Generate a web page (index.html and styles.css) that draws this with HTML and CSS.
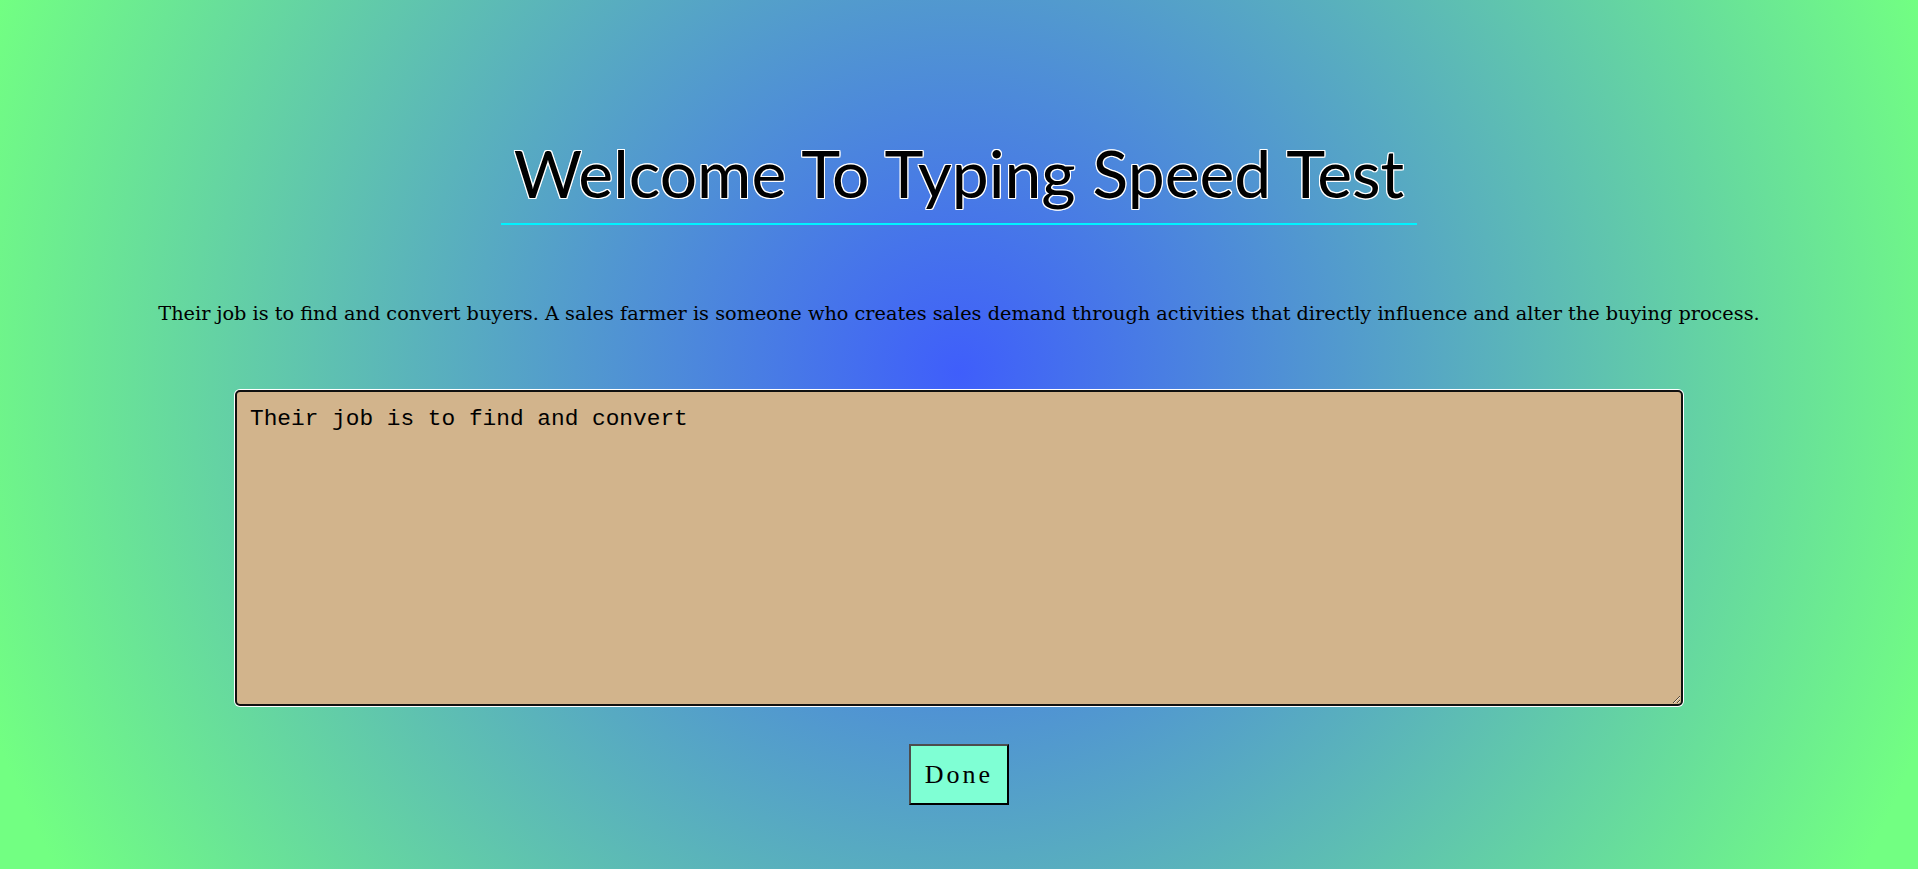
FILE: index.html
```html
<!DOCTYPE html>
<html lang="en">
<head>
<meta charset="utf-8">
<title>Typing Speed Test</title>
<link rel="stylesheet" href="styles.css">
</head>
<body>
<main class="page">
  <h1 class="title">Welcome To Typing Speed Test</h1>
  <p class="sample">Their job is to find and convert buyers. A sales farmer is someone who creates sales demand through activities that directly influence and alter the buying process.</p>
  <textarea class="typing" id="typing" spellcheck="false">Their job is to find and convert</textarea>
  <button class="done" type="button">Done</button>
</main>
<script src="script.js"></script>
</body>
</html>
```
FILE: styles.css
```css
html {
  min-height: 100%;
  background: radial-gradient(circle 1030px at 50% 373px, #3f5efb 0%, #72ff82 100%);
  background-color: #72ff82;
}
body {
  margin: 0;
  padding: 8px;
}
.page {
  display: flex;
  flex-direction: column;
  align-items: center;
}
.title {
  margin: 125px 0 0 0;
  padding: 0 13px 11px;
  font-family: Lato, "Noto Sans", sans-serif;
  font-weight: 400;
  font-size: 66px;
  line-height: 79px;
  color: #000;
  border-bottom: 2px solid #00f2ff;
  text-shadow: 1px 0 0 #fff, -1px 0 0 #fff, 0 1px 0 #fff, 0 -1px 0 #fff,
    1px 1px 0 #fff, -1px -1px 0 #fff, 1px -1px 0 #fff, -1px 1px 0 #fff;
}
.sample {
  margin: 77px 0 0 0;
  font-family: "DejaVu Serif", "Liberation Serif", serif;
  font-size: 19.3px;
  line-height: 24px;
  color: #000;
  text-align: center;
}
.typing {
  box-sizing: border-box;
  margin-top: 64px;
  width: 1448px;
  height: 316px;
  padding: 13px 13px 10px;
  background: #d2b48c;
  border: 2px solid #101010;
  border-radius: 5px;
  box-shadow: 0 0 0 1px #fff;
  outline: none;
  font-family: "Liberation Mono", monospace;
  font-size: 22.8px;
  line-height: 28px;
  color: #000;
  caret-color: #000;
  resize: both;
}
.done {
  margin-top: 38px;
  box-sizing: border-box;
  width: 100px;
  height: 61px;
  padding: 0;
  background: #7fffd4;
  border: 2px solid;
  border-color: #4d4d4d #000 #000 #4d4d4d;
  font-family: "Liberation Serif", serif;
  font-size: 26px;
  letter-spacing: 3px;
  color: #000;
}
```
FILE: script.js
```js
var t = document.getElementById('typing');
t.focus();
t.setSelectionRange(t.value.length, t.value.length);
```
